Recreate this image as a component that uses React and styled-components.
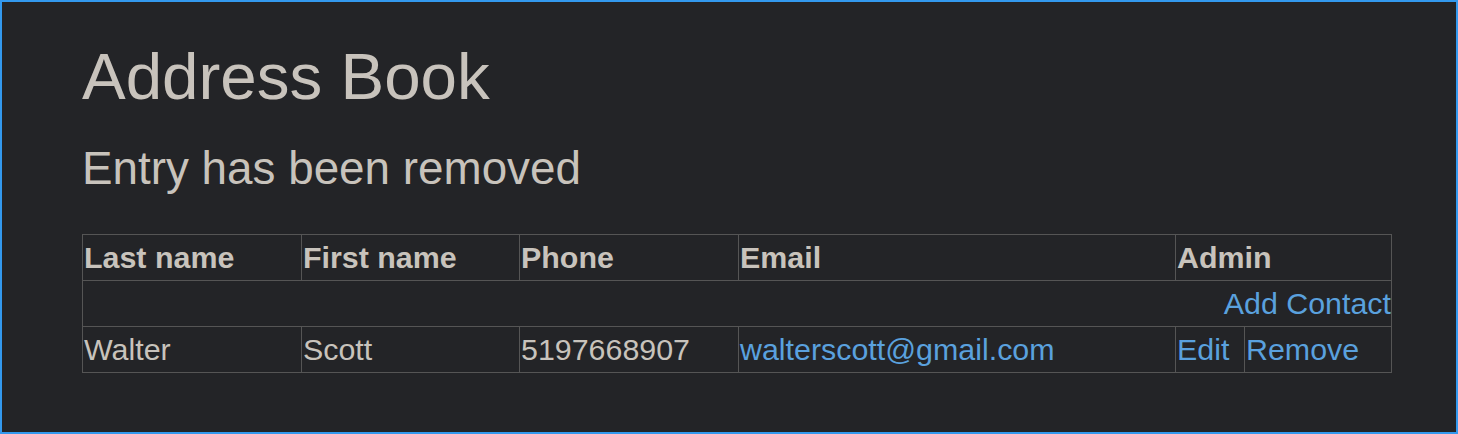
import React from 'react'
import styled, { createGlobalStyle } from 'styled-components'

const GlobalStyle = createGlobalStyle`
  html, body {
    margin: 0;
    padding: 0;
    background: #232427;
  }
`;

const Frame = styled.div`
  box-sizing: border-box;
  width: 100%;
  height: 100vh;
  border: 2px solid #3399ee;
  background: #232427;
  color: #c8c3bc;
  font-family: "Liberation Sans", Arial, sans-serif;
  padding: 42px 80px 0;
`;

const Title = styled.h1`
  margin: 0;
  font-size: 65.5px;
  font-weight: normal;
  line-height: 66px;
`;

const Message = styled.h2`
  margin: 36px 0 0;
  font-size: 45.8px;
  font-weight: normal;
  line-height: 45.6px;
`;

const Table = styled.table`
  margin-top: 42px;
  width: 1309px;
  table-layout: fixed;
  border-collapse: collapse;
  font-size: 30.4px;
  border: 1px solid #555;
`;

const Head = styled.th`
  text-align: left;
  font-weight: bold;
  padding: 5px 1px;
  border: 1px solid #555;
  white-space: nowrap;
`;

const Cell = styled.td`
  text-align: ${p => (p.$right ? 'right' : 'left')};
  padding: ${p => (p.$right ? '5px 0 5px 1px' : '5px 1px')};
  border: 1px solid #555;
  white-space: nowrap;
`;

const Link = styled.a`
  color: #5aa1de;
  text-decoration: none;
`;

const contacts = [
  { last: 'Walter', first: 'Scott', phone: '5197668907', email: 'walterscott@gmail.com' },
];

export default function App() {
  return (
    <Frame>
      <GlobalStyle />
      <Title>Address Book</Title>
      <Message>Entry has been removed</Message>
      <Table>
        <colgroup>
          <col style={{ width: 219 }} />
          <col style={{ width: 218 }} />
          <col style={{ width: 219 }} />
          <col style={{ width: 437 }} />
          <col style={{ width: 69 }} />
          <col style={{ width: 147 }} />
        </colgroup>
        <thead>
          <tr>
            <Head>Last name</Head>
            <Head>First name</Head>
            <Head>Phone</Head>
            <Head>Email</Head>
            <Head colSpan={2}>Admin</Head>
          </tr>
        </thead>
        <tbody>
          <tr>
            <Cell colSpan={6} $right>
              <Link href="#">Add Contact</Link>
            </Cell>
          </tr>
          {contacts.map(c => (
            <tr key={c.email}>
              <Cell>{c.last}</Cell>
              <Cell>{c.first}</Cell>
              <Cell>{c.phone}</Cell>
              <Cell>
                <Link href="#">{c.email}</Link>
              </Cell>
              <Cell>
                <Link href="#">Edit</Link>
              </Cell>
              <Cell>
                <Link href="#">Remove</Link>
              </Cell>
            </tr>
          ))}
        </tbody>
      </Table>
    </Frame>
  )
}
